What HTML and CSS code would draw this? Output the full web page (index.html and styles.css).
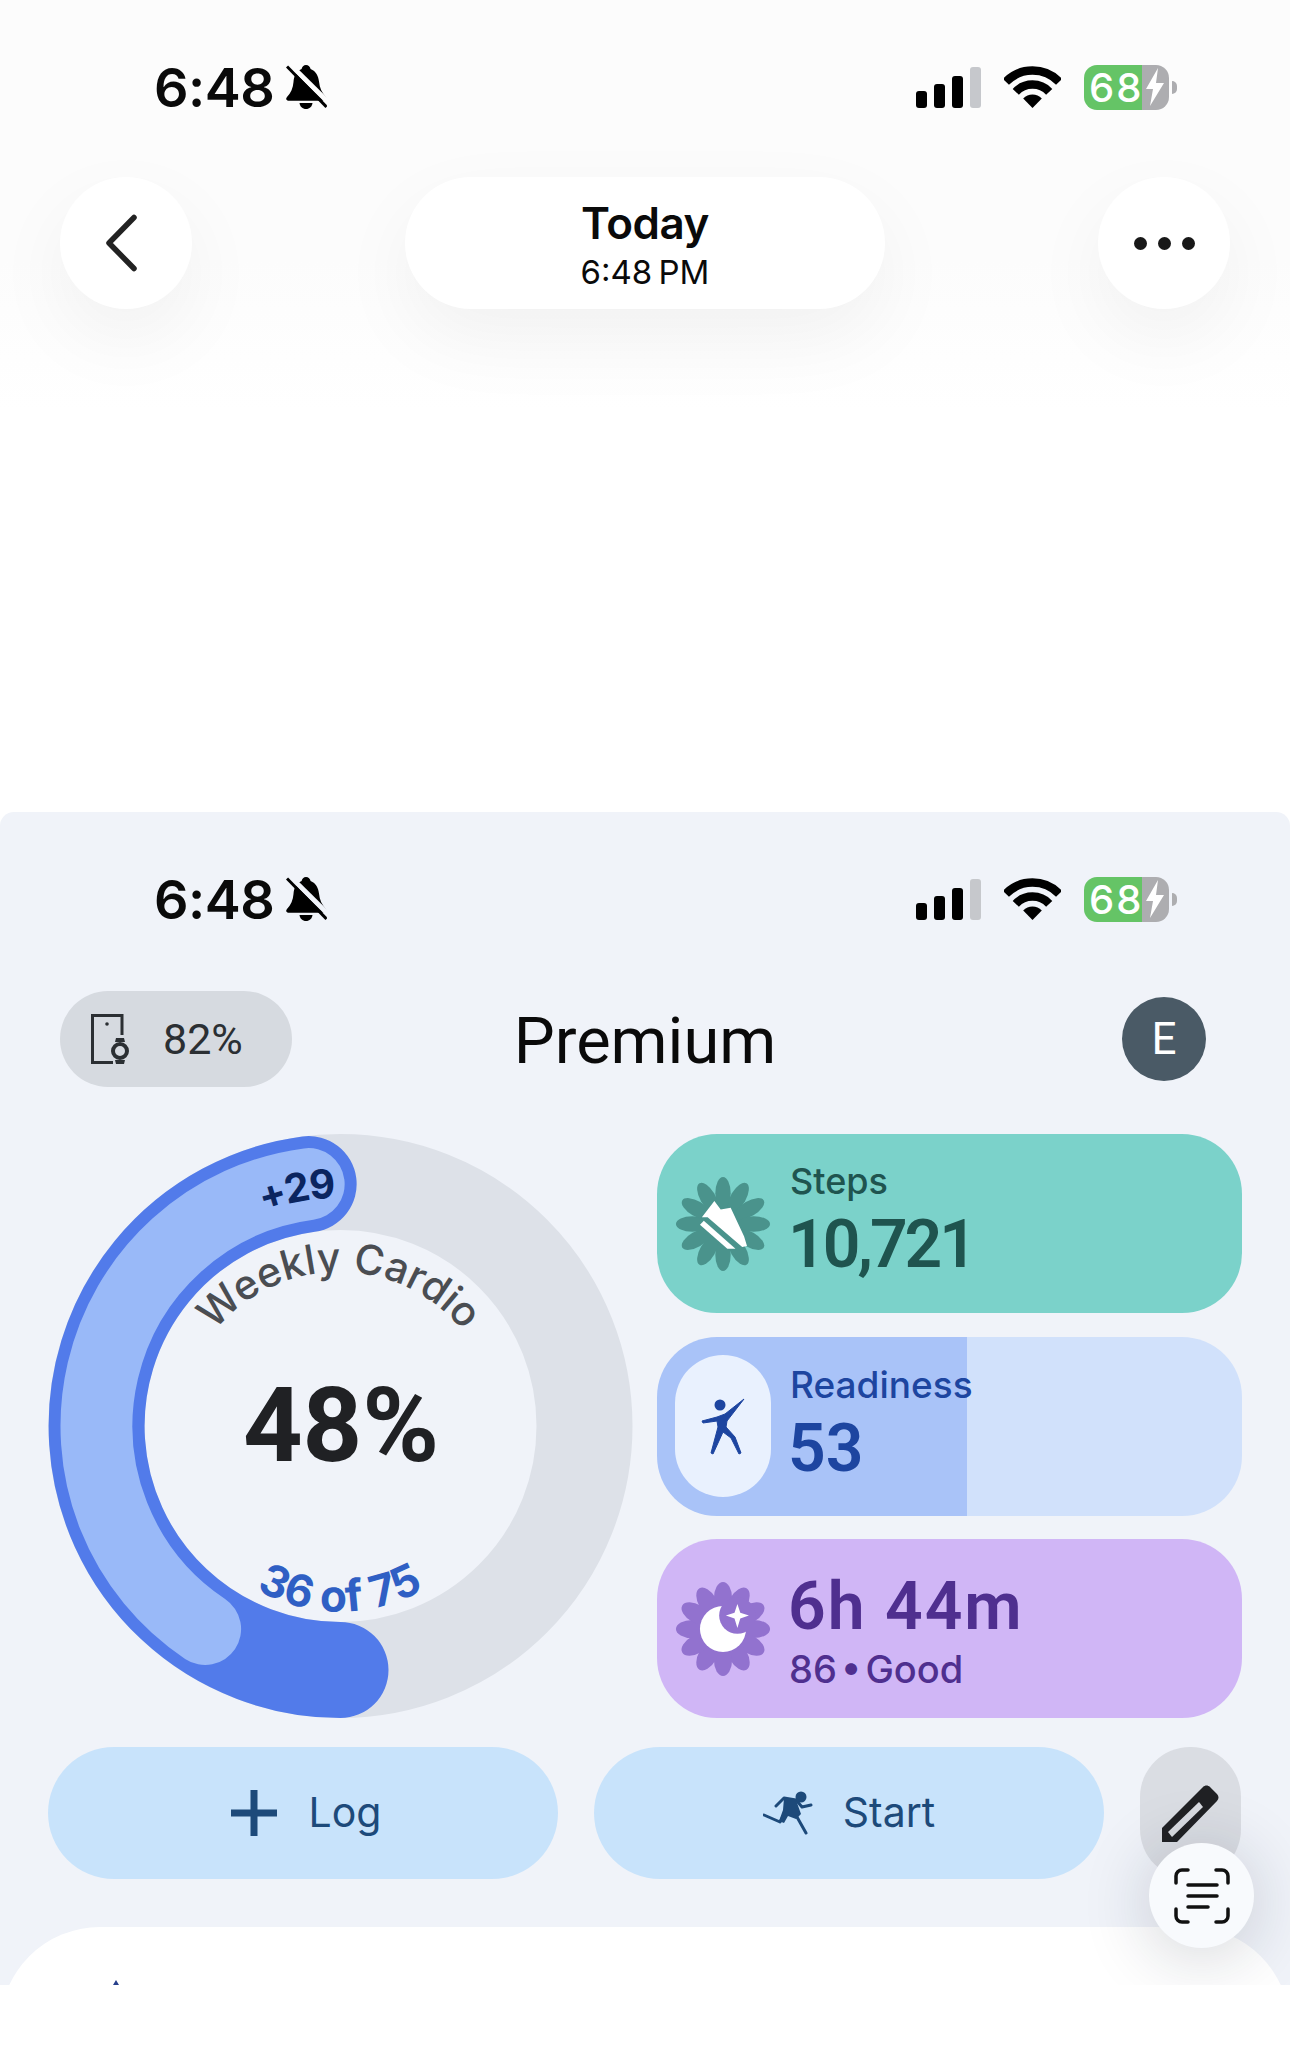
FILE: index.html
```html
<!DOCTYPE html>
<html lang="en">
<head>
<meta charset="utf-8">
<title>Today</title>
<link rel="stylesheet" href="styles.css">
</head>
<body>
<svg class="defs" width="0" height="0" aria-hidden="true">
  <symbol id="bell" viewBox="0 0 41 44">
    <path d="M20 0c-2.400 0-4 1.800-4.400 4C10 6 8 11 7.500 17c-.5 6-2.500 11-6.500 15-1.500 1.600-.8 3.700 1.300 3.700h36c2.300 0 3-2.200 1.500-3.800-4-4.300-6.200-9-6.800-15.400C32.300 11 30 6 24.600 4 24.200 1.800 22.400 0 20 0z"/>
    <path d="M13.500 38h13c-.3 3.400-3 6-6.500 6s-6.200-2.600-6.500-6z"/>
    <path class="bell-gap" d="M3.500 -1L44 39"/>
    <path class="bell-line" d="M1 1.500L40.500 42"/>
  </symbol>
  <symbol id="wifi" viewBox="0 0 57 42">
    <path d="M1.900 15.900A37 37 0 0 1 55.100 15.900" fill="none" stroke="#000" stroke-width="8.500"/>
    <path d="M11.800 25.800A23 23 0 0 1 45.200 25.800" fill="none" stroke="#000" stroke-width="8.500"/>
    <path d="M28.500 42L19.200 32.500A13 13 0 0 1 37.800 32.500z"/>
  </symbol>
  <symbol id="bolt" viewBox="0 0 20 38">
    <path d="M13 0L1 21h7L5 38 19 15h-8z" fill="#fff"/>
  </symbol>
</svg>

<header class="top">
  <div class="status">
    <span class="clock">6:48</span>
    <svg class="bell"><use href="#bell"/></svg>
    <span class="status-gap"></span>
    <span class="bars"><i class="bar b1"></i><i class="bar b2"></i><i class="bar b3"></i><i class="bar b4"></i></span>
    <svg class="wifi"><use href="#wifi"/></svg>
    <span class="battery"><span class="battery-num">68</span><svg class="bolt"><use href="#bolt"/></svg></span>
    <i class="nub"></i>
  </div>
  <nav class="nav">
    <button class="round" aria-label="Back">
      <svg class="chevron" width="34" height="58" viewBox="0 0 34 58"><path d="M29 3.500L4 29l25 25.500" fill="none" stroke="#222" stroke-width="5.500" stroke-linecap="round" stroke-linejoin="round"/></svg>
    </button>
    <div class="nav-title"><span class="today">Today</span><span class="now">6:48 PM</span></div>
    <button class="round" aria-label="More"><i class="dot"></i><i class="dot"></i><i class="dot"></i></button>
  </nav>
</header>

<main class="panel">
  <div class="status">
    <span class="clock">6:48</span>
    <svg class="bell"><use href="#bell"/></svg>
    <span class="status-gap"></span>
    <span class="bars"><i class="bar b1"></i><i class="bar b2"></i><i class="bar b3"></i><i class="bar b4"></i></span>
    <svg class="wifi"><use href="#wifi"/></svg>
    <span class="battery"><span class="battery-num">68</span><svg class="bolt"><use href="#bolt"/></svg></span>
    <i class="nub"></i>
  </div>

  <div class="head">
    <div class="device">
      <svg width="40" height="50" viewBox="0 0 40 50">
        <path d="M22 48.500H1.500V1.500H31V21" fill="none" stroke="#2b2f33" stroke-width="3"/>
        <circle cx="16" cy="10" r="1.800" fill="#2b2f33"/>
        <circle cx="29" cy="37" r="7" fill="none" stroke="#2b2f33" stroke-width="4"/>
        <path d="M24 28l1-4h8l1 4zM24 46l1 4h8l1-4z" fill="#2b2f33"/>
      </svg>
      <span class="device-pct">82%</span>
    </div>
    <h1 class="title">Premium</h1>
    <div class="avatar">E</div>
  </div>

  <section class="stats">
    <svg class="ring" viewBox="0 0 585 585" role="img" aria-label="Weekly Cardio 48%">
      <defs>
        <path id="p-weekly" d="M152.400 218A160 160 0 0 1 429.600 218"/>
        <path id="p-count" d="M145 393A170 170 0 0 0 439 393"/>
        <path id="p-plus" d="M146 117A228 228 0 0 1 370 77.500"/>
      </defs>
      <circle cx="292.500" cy="292" r="244" fill="none" stroke="#dde1e8" stroke-width="96"/>
      <path d="M292.500 536A244 244 0 0 1 260.650 50.100" fill="none" stroke="#527bea" stroke-width="96" stroke-linecap="round"/>
      <path d="M157.100 495A244 244 0 0 1 260.650 50.100" fill="none" stroke="#99b9f8" stroke-width="72" stroke-linecap="round"/>
      <text class="t-plus"><textPath href="#p-plus" startOffset="49%">+29</textPath></text>
      <text class="t-weekly"><textPath href="#p-weekly" startOffset="50%">Weekly Cardio</textPath></text>
      <text class="t-pct" x="293" y="327">48%</text>
      <text class="t-count"><textPath href="#p-count" startOffset="50%">36 of 75</textPath></text>
    </svg>

    <div class="cards">
      <div class="card steps">
        <svg class="badge" viewBox="-50 -50 100 100">
          <g class="petals-steps">
            <circle r="25"/>
            <ellipse cy="-32" rx="8" ry="17"/><ellipse cy="-32" rx="8" ry="17" transform="rotate(30)"/><ellipse cy="-32" rx="8" ry="17" transform="rotate(60)"/><ellipse cy="-32" rx="8" ry="17" transform="rotate(90)"/><ellipse cy="-32" rx="8" ry="17" transform="rotate(120)"/><ellipse cy="-32" rx="8" ry="17" transform="rotate(150)"/><ellipse cy="-32" rx="8" ry="17" transform="rotate(180)"/><ellipse cy="-32" rx="8" ry="17" transform="rotate(210)"/><ellipse cy="-32" rx="8" ry="17" transform="rotate(240)"/><ellipse cy="-32" rx="8" ry="17" transform="rotate(270)"/><ellipse cy="-32" rx="8" ry="17" transform="rotate(300)"/><ellipse cy="-32" rx="8" ry="17" transform="rotate(330)"/>
          </g>
          <path d="M-22-7L-9-24l6.600 9L8-17l14 30 3 10-5 1L-16-7z" fill="#fff"/>
          <path d="M-24 .7l4-4.200L13 25.700H4.500z" fill="#fff"/>
        </svg>
        <div class="card-text steps-text">
          <span class="label">Steps</span>
          <span class="value steps-value">10,721</span>
        </div>
      </div>

      <div class="card ready">
        <div class="ready-pill">
          <svg width="50" height="60" viewBox="0 0 50 60">
            <circle cx="22" cy="9" r="5.500" fill="#1d45a0"/>
            <path d="M4 25l15-4 8-3 19-15-17 22-1 6 9 10 6 16-2 1-8-16-8-6-10 22-2-1 7-26-1-6-14 2z" fill="#1d45a0" stroke="#1d45a0" stroke-width="1" stroke-linejoin="round"/>
          </svg>
        </div>
        <div class="card-text ready-text">
          <span class="label ready-label">Readiness</span>
          <span class="value ready-value">53</span>
        </div>
      </div>

      <div class="card sleep">
        <svg class="badge" viewBox="-50 -50 100 100">
          <g class="petals-sleep">
            <circle r="28"/>
            <ellipse cy="-32" rx="9.500" ry="17"/><ellipse cy="-32" rx="9.500" ry="17" transform="rotate(30)"/><ellipse cy="-32" rx="9.500" ry="17" transform="rotate(60)"/><ellipse cy="-32" rx="9.500" ry="17" transform="rotate(90)"/><ellipse cy="-32" rx="9.500" ry="17" transform="rotate(120)"/><ellipse cy="-32" rx="9.500" ry="17" transform="rotate(150)"/><ellipse cy="-32" rx="9.500" ry="17" transform="rotate(180)"/><ellipse cy="-32" rx="9.500" ry="17" transform="rotate(210)"/><ellipse cy="-32" rx="9.500" ry="17" transform="rotate(240)"/><ellipse cy="-32" rx="9.500" ry="17" transform="rotate(270)"/><ellipse cy="-32" rx="9.500" ry="17" transform="rotate(300)"/><ellipse cy="-32" rx="9.500" ry="17" transform="rotate(330)"/>
          </g>
          <circle r="24" fill="#fff"/>
          <circle cx="15" cy="-14" r="19" class="moon-cut"/>
          <path d="M15-26l3 9 9 3-9 3-3 10-3-10-9-3 9-3z" fill="#fff"/>
        </svg>
        <div class="card-text sleep-text">
          <span class="value sleep-value">6h 44m</span>
          <span class="label sub">86 • Good</span>
        </div>
      </div>
    </div>
  </section>

  <div class="actions">
    <button class="action">
      <svg width="46" height="46" viewBox="0 0 46 46"><path d="M23 0v46M0 23h46" stroke="#1d4a7a" stroke-width="7"/></svg>
      <span>Log</span>
    </button>
    <button class="action action-start">
      <svg width="50" height="44" viewBox="0 0 50 44">
        <circle cx="38" cy="6" r="5.500" fill="#1d4a7a"/>
        <path d="M1 24l16 7 6-11M13 15l8-8 12 2 6 7 9-2M34 26l9 16" fill="none" stroke="#1d4a7a" stroke-width="3" stroke-linecap="round" stroke-linejoin="round"/>
        <path d="M21 7l12 2 5 14-5 5-8-3-4 7-5-2 4-11z" fill="#1d4a7a"/>
      </svg>
      <span>Start</span>
    </button>
    <button class="edit" aria-label="Edit">
      <svg width="57" height="57" viewBox="0 0 57 57">
        <path d="M0 57V43L41 2c2-2 5-2 7 0l7 7c2 2 2 5 0 7L15 57z" fill="#202124"/>
        <path d="M6 47l31-30 4 5-31 30z" fill="#d8dbe1"/>
      </svg>
    </button>
  </div>

  <div class="sheet"><i class="marker"></i></div>

  <button class="fab" aria-label="Scan">
    <svg width="56" height="56" viewBox="0 0 56 56" fill="none" stroke="#111" stroke-width="3.500" stroke-linecap="round">
      <path d="M14 2H8a6 6 0 0 0-6 6v7M42 2h6a6 6 0 0 1 6 6v7M14 54H8a6 6 0 0 1-6-6v-7M42 54h6a6 6 0 0 0 6-6v-7"/>
      <path d="M14 17h29M14 28h29M14 39h20"/>
    </svg>
  </button>
</main>
</body>
</html>
```

FILE: styles.css
```css
* { box-sizing: border-box; }
html, body { margin: 0; padding: 0; background: #fff; }
body { width: 1290px; height: 2047px; overflow: hidden; font-family: "Inter", "Liberation Sans", sans-serif; color: #000; }
.defs { position: absolute; }
button { border: 0; padding: 0; margin: 0; font: inherit; color: inherit; }

.top { height: 812px; --status-bg: #fcfcfc; background: linear-gradient(#fcfcfc 0, #fcfcfc 260px, #fff 410px); padding-top: 64px; }
.panel { position: relative; height: 1173px; overflow: hidden; background: #f0f3f9; border-radius: 14px 14px 0 0; padding-top: 64px; --status-bg: #f0f3f9; }

.status { display: flex; align-items: center; height: 46px; padding: 0 113px 0 154px; }
.clock { font-size: 54px; font-weight: 600; line-height: 46px; letter-spacing: -.5px; padding-top: 2px; color: #0a0a0a; width: 132px; }
.bell { width: 41px; height: 44px; }
.bell-gap { fill: none; stroke: var(--status-bg); stroke-width: 5px; }
.bell-line { fill: none; stroke: #000; stroke-width: 3px; }
.status-gap { flex: 1; }
.bars { display: flex; align-items: flex-end; gap: 7px; height: 41px; margin-top: 1px; }
.bar { display: block; width: 11px; background: #000; border-radius: 3px; }
.b1 { height: 17px; }
.b2 { height: 24px; }
.b3 { height: 32px; }
.b4 { height: 41px; background: #c6c8cc; }
.wifi { width: 57px; height: 42px; margin-left: 23px; }
.battery { display: flex; align-items: center; width: 85px; height: 45px; margin-left: 23px; border-radius: 13px; background: linear-gradient(90deg, #65c466 68%, #adadb0 68%); padding-left: 5px; color: #fff; }
.battery-num { font-size: 40px; font-weight: 500; line-height: 45px; width: 55px; letter-spacing: 2px; }
.bolt { width: 20px; height: 38px; margin-left: 1px; }
.nub { display: block; width: 5px; height: 13px; margin-left: 3px; background: #adadb0; border-radius: 0 6px 6px 0; }

.nav { display: grid; grid-template-columns: 132px 1fr 132px; align-items: center; padding: 0 60px; margin-top: 67px; }
.round { display: flex; align-items: center; justify-content: center; gap: 11px; width: 132px; height: 132px; border-radius: 50%; background: #fff; box-shadow: 0 30px 80px rgba(0, 0, 0, .05); }
.chevron { margin-right: 8px; }
.dot { display: block; width: 13px; height: 13px; border-radius: 50%; background: #181818; }
.nav-title { justify-self: center; display: flex; flex-direction: column; align-items: center; width: 480px; height: 132px; padding-top: 20px; border-radius: 66px; background: #fff; box-shadow: 0 30px 80px rgba(0, 0, 0, .05); }
.today { font-size: 44px; font-weight: 600; line-height: 52px; letter-spacing: -.5px; color: #0a0a0a; }
.now { font-size: 33px; font-weight: 400; line-height: 46px; color: #0a0a0a; word-spacing: -3px; }

.head { display: grid; grid-template-columns: 1fr auto 1fr; align-items: center; height: 96px; padding: 0 60px; margin-top: 69px; }
.device { display: flex; align-items: center; gap: 32px; justify-self: start; width: 232px; height: 96px; padding-left: 31px; border-radius: 48px; background: #d6dae0; }
.device-pct { font-family: "Roboto", sans-serif; font-size: 43px; color: #2b2f33; }
.title { margin: 0; font-family: "Roboto", sans-serif; font-size: 65px; font-weight: 400; line-height: 100px; height: 96px; color: #0a0a0a; }
.avatar { justify-self: end; display: flex; align-items: center; justify-content: center; width: 84px; height: 84px; margin-right: 24px; border-radius: 50%; background: #4a5a66; color: #fff; font-family: "Roboto", sans-serif; font-size: 44px; }

.stats { display: grid; grid-template-columns: 1fr 1fr; gap: 24px; padding: 0 48px; margin-top: 47px; }
.ring { display: block; width: 585px; height: 585px; }
.t-plus { font-family: "Inter", sans-serif; font-size: 40px; font-weight: 700; letter-spacing: -1.5px; fill: #0b2560; text-anchor: middle; }
.t-weekly { font-family: "Inter", sans-serif; font-size: 41px; font-weight: 500; fill: #4a4d52; text-anchor: middle; }
.t-pct { font-family: "Roboto", sans-serif; font-size: 104px; font-weight: 700; fill: #202124; text-anchor: middle; }
.t-count { font-family: "Inter", sans-serif; font-size: 44px; font-weight: 700; fill: #2f5fc4; text-anchor: middle; }

.cards { display: flex; flex-direction: column; gap: 23.5px; }
.card { display: flex; align-items: center; gap: 19px; height: 179px; padding-left: 18px; border-radius: 60px; }
.badge { display: block; width: 96px; height: 96px; flex: none; }
.card-text { display: flex; flex-direction: column; }
.steps-text { padding-bottom: 8px; }
.ready-text { padding-bottom: 4px; }
.sleep-text { padding-top: 4px; }
.label { font-size: 36px; font-weight: 500; line-height: 44px; }
.value { font-family: "Roboto", sans-serif; font-size: 66px; font-weight: 600; line-height: 72px; margin-left: -2px; }
.steps-value, .ready-value { margin-top: 6px; }
.steps-value { letter-spacing: -3px; }
.ready-label { font-size: 37px; }
.sleep-value { letter-spacing: 2px; }
.steps { background: #7bd2ca; color: #1f544f; }
.petals-steps { fill: #4a938c; }
.ready { background: linear-gradient(90deg, #a9c3f8 53%, #d1e1fb 53%); color: #1d45a0; }
.ready-pill { display: flex; align-items: center; justify-content: center; flex: none; width: 96px; height: 142px; border-radius: 48px; background: #e9f1fe; }
.sleep { background: #d0b6f6; color: #4f2f8f; }
.petals-sleep { fill: #9272cf; }
.moon-cut { fill: #9272cf; }
.sub { font-size: 38px; margin-top: 4px; margin-left: -1px; word-spacing: -6px; }

.actions { display: grid; grid-template-columns: 510px 510px 101px; gap: 36px; padding: 0 48px; margin-top: 28px; }
.action { display: flex; align-items: center; justify-content: center; gap: 32px; height: 132px; padding-left: 6px; border-radius: 66px; background: #c8e3fb; color: #1d4a7a; font-size: 41px; font-weight: 400; line-height: 48px; }
.action span { margin-top: -2px; }
.action-start { gap: 30px; padding-left: 0; }
.edit { display: flex; justify-content: center; padding-top: 38px; height: 132px; border-radius: 50px; background: #dadde3; }
.sheet { position: relative; height: 200px; margin-top: 48px; border-radius: 100px 100px 0 0; background: #fff; }
.marker { position: absolute; left: 113px; top: 53px; width: 0; height: 0; border: solid transparent; border-width: 0 3px 5px; border-bottom-color: #27408b; }
.fab { position: absolute; left: 1149px; top: 1031px; display: flex; align-items: center; justify-content: center; width: 105px; height: 105px; border-radius: 50%; background: #f8fafd; box-shadow: 0 8px 70px rgba(20, 30, 50, .2); }
```
